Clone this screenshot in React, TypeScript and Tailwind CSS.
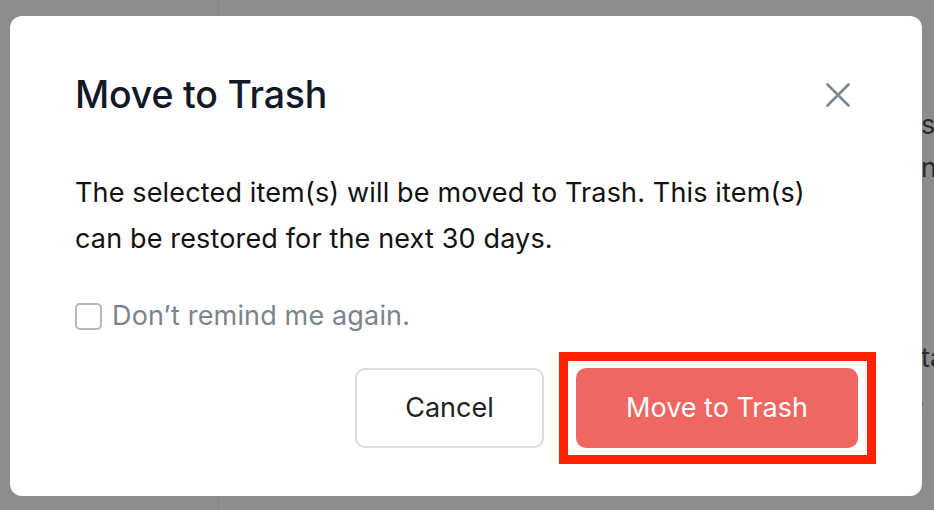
import React from "react";

export default function App() {
  const font = { fontFamily: "Inter, 'Noto Sans', sans-serif" };
  return (
    <div className="relative w-[934px] h-[510px] overflow-hidden bg-[#8c8c8c]" style={font}>
      {/* background page */}
      <div className="flex h-full">
        <div className="w-[219px] shrink-0 h-full border-r border-[#858585]" />
        <div className="flex-1 min-w-0 flex flex-col pl-[702px] text-[27px] text-[#2a2a2a] whitespace-nowrap overflow-hidden">
          <div className="mt-[108px] leading-[34px]">so</div>
          <div className="mt-[9px] leading-[34px]">n</div>
          <div className="mt-[156px] leading-[34px]">ta</div>
          <div className="mt-[12px] leading-[34px] -ml-[13px]">e</div>
        </div>
      </div>

      {/* dialog overlay */}
      <div className="absolute inset-0 pl-[10px] pt-[16px]">
        <div className="w-[912px] h-[480px] bg-white rounded-[12px] pl-[65px] pr-[64px] pt-[56px] flex flex-col">
          <div className="flex items-center justify-between h-[46px]">
            <h2 className="text-[37.5px] font-medium text-[#111827] leading-[46px] tracking-[-0.2px]">Move to Trash</h2>
            <button className="w-[40px] h-[40px] flex items-center justify-center text-[#7e868e]">
              <svg width="24" height="24" viewBox="0 0 24 24" fill="none" stroke="currentColor" strokeWidth="2.6" strokeLinecap="round">
                <path d="M1.5 1.5 L22.5 22.5 M22.5 1.5 L1.5 22.5" />
              </svg>
            </button>
          </div>

          <p className="mt-[52px] text-[27px] leading-[46px] tracking-[0.15px] text-[#111111] w-[760px]">
            The selected item(s) will be moved to Trash. This item(s) can be restored for the next 30 days.
          </p>

          <label className="mt-[31px] h-[46px] flex items-center gap-[10px]">
            <span className="w-[27px] h-[27px] rounded-[5px] border-2 border-[#b4bac1] bg-white" />
            <span className="text-[27px] tracking-[0.15px] text-[#7b848e]">Don’t remind me again.</span>
          </label>

          <div className="mt-[29px] flex justify-end gap-[32px]">
            <button className="w-[189px] h-[80px] rounded-[10px] border-2 border-[#dddddd] bg-white text-[27px] text-[#222222]">
              Cancel
            </button>
            <div className="relative">
              <button className="w-[282px] h-[80px] rounded-[10px] bg-[#f06762] text-[27px] text-white">
                Move to Trash
              </button>
              <div className="absolute -left-[17px] -right-[18px] -top-[16px] -bottom-[16px] border-[9px] border-[#ff2200] pointer-events-none" />
            </div>
          </div>
        </div>
      </div>
    </div>
  );
}
